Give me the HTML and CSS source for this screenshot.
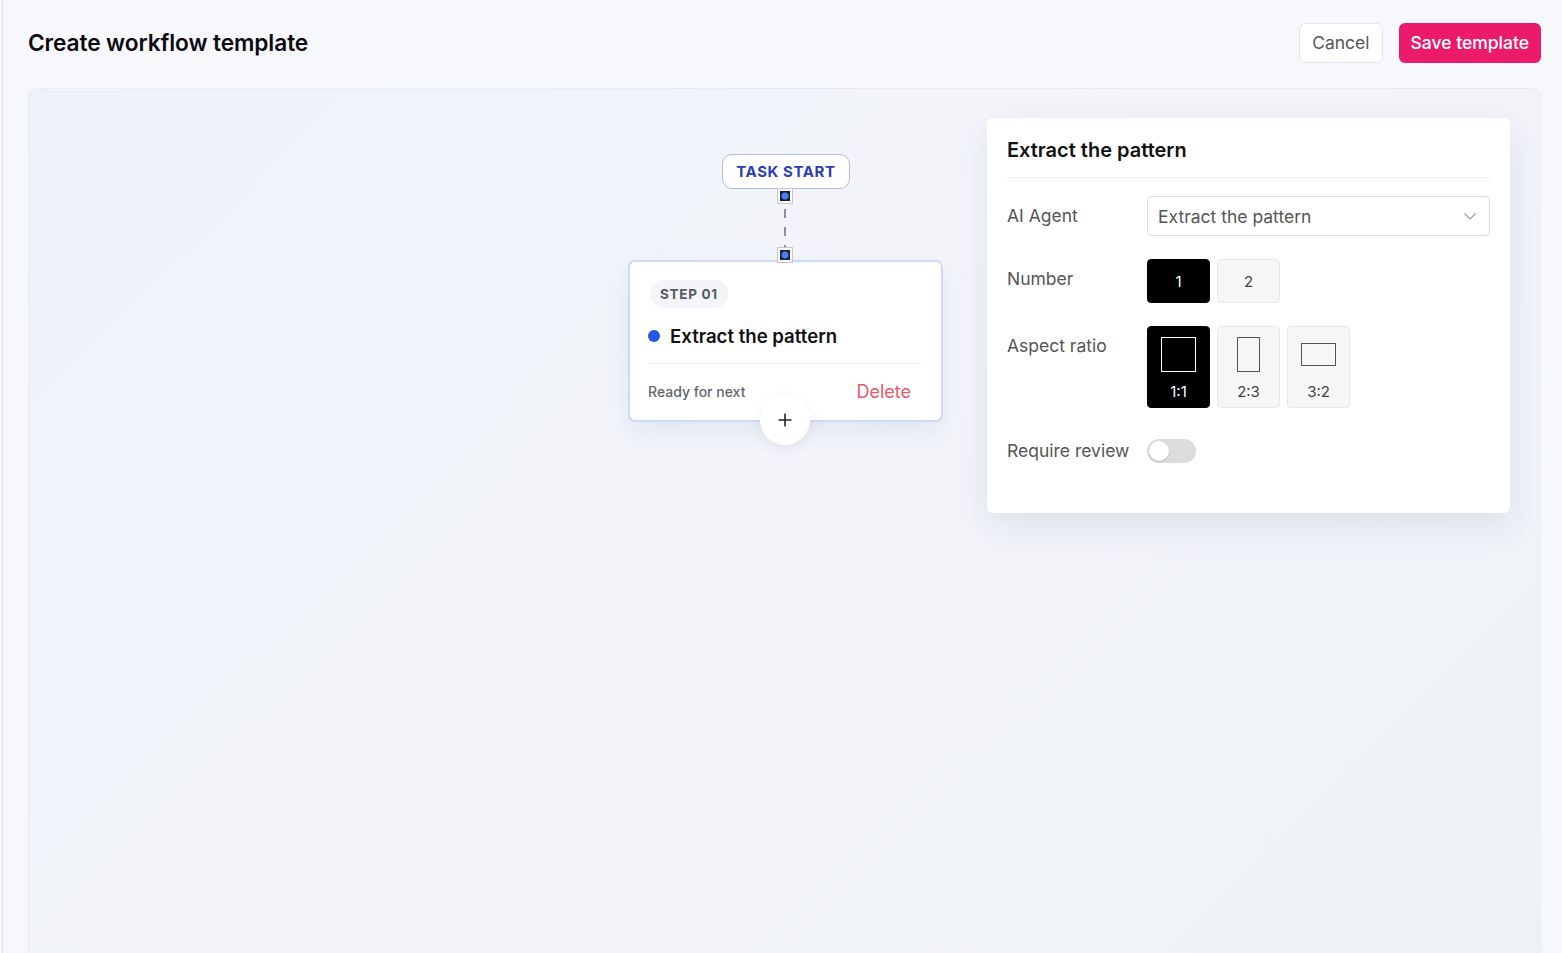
FILE: index.html
```html
<!DOCTYPE html>
<html lang="en">
  <head>
    <meta charset="UTF-8" />
    <meta name="viewport" content="width=device-width, initial-scale=1.0" />
    <title>Create workflow template</title>
    <link rel="stylesheet" href="styles.css">
  </head>
  <body>
    <div class="app">
      <header class="topbar">
        <h1 class="page-title">Create workflow template</h1>
        <div class="actions">
          <button type="button" class="btn btn-ghost">Cancel</button>
          <button type="button" class="btn btn-primary">Save template</button>
        </div>
      </header>

      <main class="canvas">
        <div class="task-start">TASK START</div>
        <span class="port port-out"><i></i></span>
        <span class="edge"></span>
        <span class="port port-in"><i></i></span>

        <div class="step-card">
          <span class="step-tag">STEP 01</span>
          <div class="step-title"><span class="dot"></span>Extract the pattern</div>
          <div class="step-foot">
            <span class="step-status">Ready for next</span>
            <button type="button" class="link-delete">Delete</button>
          </div>
          <button type="button" class="add-step">
            <svg width="16" height="16" viewBox="0 0 16 16"><path d="M8 1.5v13M1.5 8h13" stroke="#222" stroke-width="1.6" fill="none"/></svg>
          </button>
        </div>

        <aside class="panel">
          <h2 class="panel-title">Extract the pattern</h2>
          <div class="form">
            <label class="field-label">AI Agent</label>
            <div class="select">
              <span>Extract the pattern</span>
              <svg width="14" height="14" viewBox="0 0 14 14"><path d="M1.5 4.5L7 10l5.5-5.5" stroke="#999" stroke-width="1.1" fill="none"/></svg>
            </div>

            <label class="field-label">Number</label>
            <div class="opts">
              <button type="button" class="opt opt-num active">1</button>
              <button type="button" class="opt opt-num">2</button>
            </div>

            <label class="field-label">Aspect ratio</label>
            <div class="opts">
              <button type="button" class="opt opt-ratio active"><span class="shape sq"></span>1:1</button>
              <button type="button" class="opt opt-ratio"><span class="shape tall"></span>2:3</button>
              <button type="button" class="opt opt-ratio"><span class="shape wide"></span>3:2</button>
            </div>

            <label class="field-label">Require review</label>
            <div class="toggle-wrap">
              <span class="toggle"><span class="knob"></span></span>
            </div>
          </div>
        </aside>
      </main>
    </div>
  </body>
</html>
```

FILE: styles.css
```css
* {
  box-sizing: border-box;
}
body {
  margin: 0;
  background-color: #f7f8fc;
  font-family: Inter, "Noto Sans", sans-serif;
  color: #111;
}
.app {
  height: 953px;
  overflow: hidden;
  margin-left: 2px;
  border-left: 1px solid #dfe2ea;
}
.topbar {
  height: 88px;
  display: flex;
  align-items: center;
  justify-content: space-between;
  padding: 0 21px 3px 25px;
}
.page-title {
  margin: 0;
  font-size: 22.7px;
  font-weight: 600;
  color: #0b0b10;
  letter-spacing: -0.1px;
}
.actions {
  display: flex;
  gap: 16px;
}
.btn {
  height: 40px;
  padding: 0 12px;
  border-radius: 6px;
  font-family: inherit;
  font-size: 17.5px;
  cursor: pointer;
}
.btn-ghost {
  background-color: #fff;
  border: 1px solid #e3e5ea;
  color: #555;
}
.btn-primary {
  background-color: #ec1a6b;
  border: none;
  color: #fff;
  font-weight: 500;
}
.canvas {
  position: relative;
  height: 880px;
  margin: 0 21px 0 25px;
  border: 1px solid #e9ecf1;
  border-radius: 8px;
  background: linear-gradient(135deg, #edf1f9 0%, #f3f5fa 45%, #eef1f6 100%);
}
.task-start {
  position: absolute;
  left: 693px;
  top: 65px;
  width: 128px;
  height: 35px;
  display: flex;
  align-items: center;
  justify-content: center;
  background-color: #fff;
  border: 1px solid #aebcea;
  border-radius: 10px;
  color: #2a3db5;
  font-size: 15px;
  font-weight: 700;
  letter-spacing: 0.6px;
}
.port {
  position: absolute;
  left: 748px;
  width: 16px;
  height: 16px;
  padding: 2px;
  background-color: #fff;
  border: 1px solid #c2c6ce;
  z-index: 2;
}
.port i {
  display: block;
  width: 100%;
  height: 100%;
  background: radial-gradient(circle, #4a7cf2 0 3px, #18203f 4px);
}
.port-out {
  top: 99px;
}
.port-in {
  top: 158px;
}
.edge {
  position: absolute;
  left: 755px;
  top: 115px;
  width: 2px;
  height: 43px;
  background: repeating-linear-gradient(to bottom, transparent 0 5px, #8d9096 5px 14px, transparent 14px 18px);
}
.step-card {
  position: absolute;
  left: 599px;
  top: 171px;
  width: 315px;
  height: 162px;
  padding: 18px 20px 0 18px;
  background-color: #fff;
  border: 2px solid #cbdaf6;
  border-radius: 7px;
  box-shadow: 0 10px 24px rgba(40, 60, 110, 0.08);
}
.step-tag {
  display: inline-block;
  height: 28px;
  line-height: 28px;
  margin-left: 2px;
  padding: 0 10px;
  background-color: #f4f5f8;
  border-radius: 14px;
  color: #555a63;
  font-size: 13.5px;
  font-weight: 700;
  letter-spacing: 0.7px;
}
.step-title {
  display: flex;
  align-items: center;
  gap: 10px;
  height: 26px;
  margin-top: 15px;
  font-size: 18.6px;
  font-weight: 600;
  color: #111;
}
.dot {
  width: 12px;
  height: 12px;
  border-radius: 50%;
  background-color: #2458e2;
}
.step-foot {
  display: flex;
  align-items: center;
  justify-content: space-between;
  margin-top: 14px;
  padding: 17px 10px 0 0;
  border-top: 1px solid #f0f1f4;
}
.step-status {
  font-size: 14px;
  font-weight: 500;
  color: #62666e;
}
.link-delete {
  padding: 0;
  border: none;
  background: none;
  font-family: inherit;
  font-size: 18px;
  color: #e8586c;
}
.add-step {
  position: absolute;
  left: 130px;
  bottom: -25px;
  width: 50px;
  height: 50px;
  display: flex;
  align-items: center;
  justify-content: center;
  border: none;
  border-radius: 50%;
  background-color: #fff;
  box-shadow: 0 4px 14px rgba(40, 60, 110, 0.08);
}
.panel {
  position: absolute;
  right: 30px;
  top: 29px;
  width: 523px;
  height: 395px;
  padding: 20px 20px 0 20px;
  background-color: #fff;
  border-radius: 6px;
  box-shadow: 0 12px 34px rgba(40, 60, 110, 0.1);
}
.panel-title {
  margin: 0;
  padding-bottom: 15px;
  line-height: 24px;
  font-size: 20px;
  font-weight: 600;
  color: #111;
  border-bottom: 1px solid #ebedf0;
}
.form {
  display: grid;
  grid-template-columns: 140px 1fr;
  row-gap: 23px;
  margin-top: 18px;
}
.field-label {
  padding-top: 9px;
  line-height: 22px;
  font-size: 17.5px;
  color: #555;
}
.select {
  height: 40px;
  display: flex;
  align-items: center;
  justify-content: space-between;
  padding: 0 12px 0 10px;
  border: 1px solid #dcdee3;
  border-radius: 4px;
  font-size: 17.5px;
  color: #555;
}
.opts {
  display: flex;
  gap: 7px;
}
.opt {
  width: 63px;
  padding: 0;
  border: 1px solid #e6e7ea;
  border-radius: 4px;
  background-color: #f6f6f7;
  font-family: inherit;
  font-size: 15px;
  color: #444;
}
.opt.active {
  background-color: #000;
  border-color: #000;
  color: #fff;
}
.opt-num {
  height: 44px;
}
.opt-ratio {
  height: 82px;
  display: flex;
  flex-direction: column;
  align-items: center;
  padding-top: 10px;
}
.shape {
  display: block;
  border: 1px solid #555;
  margin-bottom: 10px;
}
.opt.active .shape {
  border-color: #fff;
}
.sq {
  width: 35px;
  height: 35px;
}
.tall {
  width: 23px;
  height: 35px;
}
.wide {
  width: 35px;
  height: 23px;
  margin-top: 6px;
  margin-bottom: 16px;
}
.toggle-wrap {
  padding-top: 8px;
}
.toggle {
  display: block;
  position: relative;
  width: 49px;
  height: 24px;
  border-radius: 12px;
  background-color: #dcdcdf;
}
.knob {
  position: absolute;
  left: 2px;
  top: 2px;
  width: 20px;
  height: 20px;
  border-radius: 50%;
  background-color: #fff;
  box-shadow: 0 1px 2px rgba(0, 0, 0, 0.15);
}
```
